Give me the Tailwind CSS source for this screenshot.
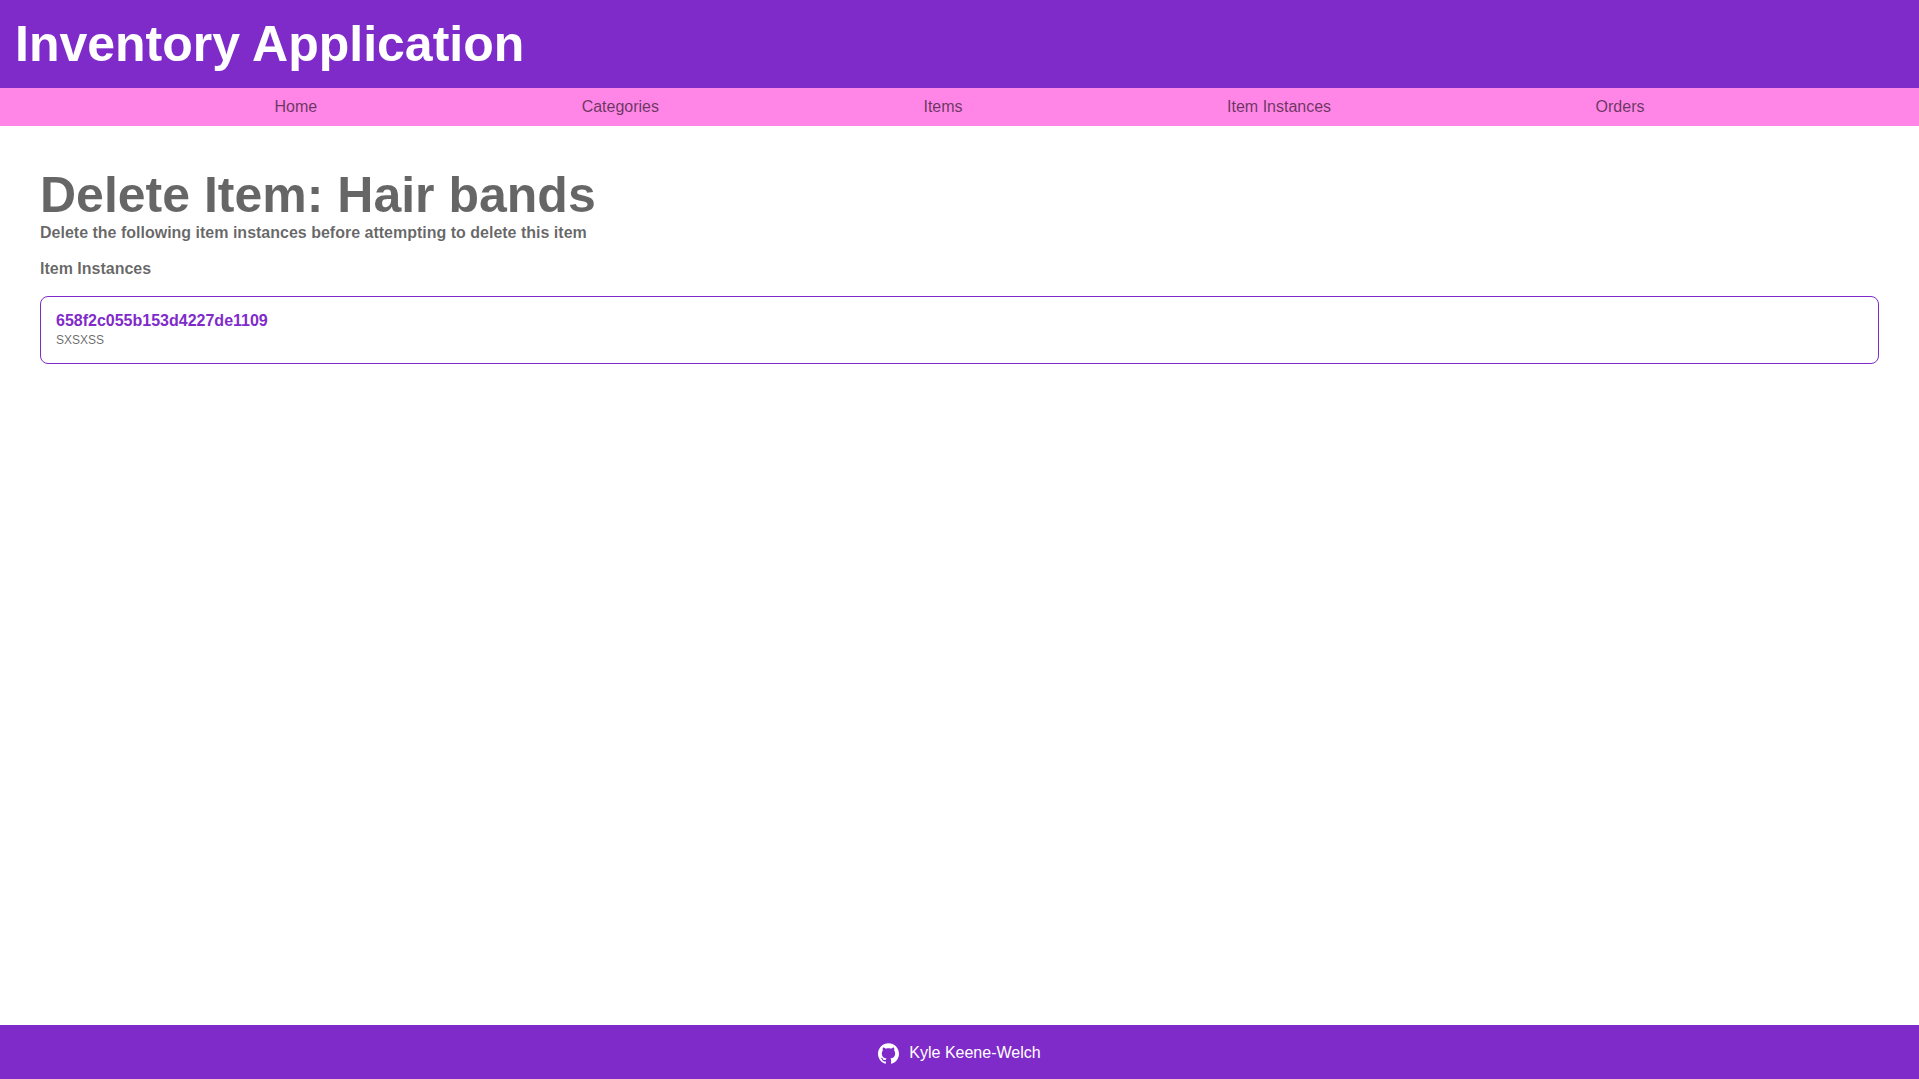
<!DOCTYPE html>
<html lang="en">
<head>
<meta charset="utf-8">
<meta name="viewport" content="width=device-width, initial-scale=1">
<title>Inventory Application</title>
<script src="https://cdn.jsdelivr.net/npm/@tailwindcss/browser@4"></script>
</head>
<body class="min-h-screen flex flex-col bg-white text-black/60 font-['Liberation_Sans',Arial,sans-serif] text-base leading-[18px]">
<header>
  <div class="bg-[#7f2bca] p-[15px]">
    <h1 class="text-[50px] leading-[58px] font-bold text-white">Inventory Application</h1>
  </div>
  <nav class="bg-[#ff85e7] p-[10px]">
    <ul class="flex justify-evenly">
      <li><a href="#">Home</a></li>
      <li><a href="#">Categories</a></li>
      <li><a href="#">Items</a></li>
      <li><a href="#">Item Instances</a></li>
      <li><a href="#">Orders</a></li>
    </ul>
  </nav>
</header>
<main class="flex-1 p-10">
  <h1 class="text-[50px] leading-[58px] font-bold">Delete Item: Hair bands</h1>
  <p class="font-bold">Delete the following item instances before attempting to delete this item</p>
  <h2 class="mt-[18px] font-bold">Item Instances</h2>
  <ul class="mt-[18px]">
    <li class="rounded-lg border border-[#7f2bca] px-[15px] pt-[15px] pb-4">
      <a href="#" class="block font-bold text-[#7f2bca]">658f2c055b153d4227de1109</a>
      <p class="mt-[3px] text-xs leading-[14px]">SXSXSS</p>
    </li>
  </ul>
</main>
<footer class="flex justify-center bg-[#7f2bca] pt-[17px] pb-[15px] text-white">
  <a href="#" class="flex items-center gap-[10px] leading-[22px]">
    <svg class="size-[21px]" viewBox="0 0 24 24" fill="currentColor" aria-hidden="true"><path d="M12 .297c-6.63 0-12 5.373-12 12 0 5.303 3.438 9.8 8.205 11.385.6.113.82-.258.82-.577 0-.285-.01-1.04-.015-2.04-3.338.724-4.042-1.61-4.042-1.61C4.422 18.07 3.633 17.7 3.633 17.7c-1.087-.744.084-.729.084-.729 1.205.084 1.838 1.236 1.838 1.236 1.07 1.835 2.809 1.305 3.495.998.108-.776.417-1.305.76-1.605-2.665-.3-5.466-1.332-5.466-5.93 0-1.31.465-2.38 1.235-3.22-.135-.303-.54-1.523.105-3.176 0 0 1.005-.322 3.3 1.23.96-.267 1.98-.399 3-.405 1.02.006 2.04.138 3 .405 2.28-1.552 3.285-1.23 3.285-1.23.645 1.653.24 2.873.12 3.176.765.84 1.23 1.91 1.23 3.22 0 4.61-2.805 5.625-5.475 5.92.42.36.81 1.096.81 2.22 0 1.606-.015 2.896-.015 3.286 0 .315.21.69.825.57C20.565 22.092 24 17.592 24 12.297c0-6.627-5.373-12-12-12"/></svg>
    <span>Kyle Keene-Welch</span>
  </a>
</footer>
</body>
</html>
